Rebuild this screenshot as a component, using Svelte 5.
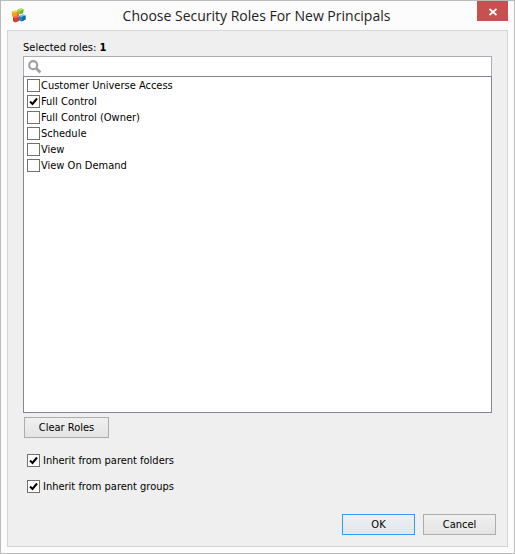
<script lang="ts">
    let roles = [
        { name: "Customer Universe Access", checked: false },
        { name: "Full Control", checked: true },
        { name: "Full Control (Owner)", checked: false },
        { name: "Schedule", checked: false },
        { name: "View", checked: false },
        { name: "View On Demand", checked: false },
    ];
    let search: string = "";
    let inheritFolders: boolean = true;
    let inheritGroups: boolean = true;

    $: selected = roles.filter((role) => role.checked).length;

    function clearRoles() {
        roles = roles.map((role) => ({ ...role, checked: false }));
    }
</script>

<div class="window">
    <header>
        <svg class="logo" width="14" height="15" viewBox="0 0 14 15" aria-hidden="true">
            <path fill="#f7a01b" d="M0 3.5L4 2.5L6 4.5V9L1.5 9.5L0 8z" />
            <path fill="#fcc850" d="M0 3.5L4 2.5L5 4L1.5 5z" />
            <path fill="#f06a20" d="M5 5L7 4.5V8L5 9z" />
            <path fill="#e2382c" d="M1 9L6 8L7 9V13L3 14.5L1 13z" />
            <path fill="#f4705a" d="M1 9L5.5 8L7 9L3 10z" />
            <path fill="#1f8ad2" d="M7 8L11 6.5L13.5 7.5V11.5L9.5 13.5L7 12.5z" />
            <path fill="#6cc6f4" d="M7 8L11 6.5L13.5 7.5L9.5 9z" />
            <path fill="#0f66b0" d="M10 9L13.5 7.5V11.5L10 13.2z" />
            <path fill="#8cc63e" d="M5 2L9 0L11.5 1.5L11 5L8 6.5L5.5 5z" />
            <path fill="#c4e264" d="M5 2L9 0L11.5 1.5L8 3z" />
            <path fill="#6cab2c" d="M8.5 3L11.5 1.5L11 5L8.5 6.3z" />
        </svg>
        <h1>Choose Security Roles For New Principals</h1>
        <button class="close" aria-label="Close">
            <svg width="8" height="8" viewBox="0 0 8 8">
                <path d="M0.5 1l7 6M7.5 1l-7 6" fill="none" stroke="#fff" stroke-width="1.7" />
            </svg>
        </button>
    </header>
    <main>
        <label class="count" for="search">Selected roles:&nbsp;<strong>{selected}</strong></label>
        <div class="search">
            <svg width="14" height="14" viewBox="0 0 14 14" aria-hidden="true">
                <circle cx="5.2" cy="5.2" r="4" fill="none" stroke="#a0a0a0" stroke-width="2.2" />
                <path d="M8 8l4.4 4.4" stroke="#a0a0a0" stroke-width="2.8" />
            </svg>
            <input id="search" type="text" bind:value={search}>
        </div>
        <div class="list">
            {#each roles as role}
                <label>
                    <input type="checkbox" bind:checked={role.checked}>
                    {role.name}
                </label>
            {/each}
        </div>
        <button class="clear" on:click={clearRoles}>Clear Roles</button>
        <div class="inherit">
            <label>
                <input type="checkbox" bind:checked={inheritFolders}>
                Inherit from parent folders
            </label>
            <label>
                <input type="checkbox" bind:checked={inheritGroups}>
                Inherit from parent groups
            </label>
        </div>
        <div class="actions">
            <button class="primary">OK</button>
            <button>Cancel</button>
        </div>
    </main>
</div>

<style>
    .window {
        box-sizing: border-box;
        min-height: 100vh;
        display: flex;
        flex-flow: column;
        padding: 0 6px 6px;
        border: 1px solid #bbbbbb;
        background: #fcfcfc;
        color: #000;
        font: 11px/17px Tahoma, "DejaVu Sans Condensed", sans-serif;
    }
    header {
        display: flex;
        align-items: center;
        height: 29px;
    }
    .logo {
        margin-left: 5px;
    }
    h1 {
        flex: 1;
        margin: 0;
        padding-left: 10px;
        text-align: center;
        color: #222;
        font: 14px/28px "Segoe UI", "Open Sans", sans-serif;
    }
    button {
        box-sizing: border-box;
        height: 21px;
        width: 73px;
        padding: 0;
        border: 1px solid #acacac;
        background: linear-gradient(#f0f0f0, #e4e4e4);
        color: #000;
        font: inherit;
    }
    .close {
        display: flex;
        align-items: center;
        justify-content: center;
        align-self: flex-start;
        width: 31px;
        height: 20px;
        padding: 2px 0 0;
        border: none;
        background: #c75050;
    }
    main {
        flex: 1;
        display: flex;
        flex-flow: column;
        padding: 8px 15px 11px;
        border: 1px solid #d5d5d5;
        background: #efefef;
    }
    .search {
        display: flex;
        align-items: center;
        height: 19px;
        padding-left: 4px;
        border: 1px solid #abadb3;
        border-bottom: none;
        background: #fff;
    }
    .search input {
        flex: 1;
        min-width: 0;
        padding: 0 4px;
        border: none;
        outline: none;
        background: none;
        font: inherit;
    }
    .list {
        flex: 1;
        display: flex;
        flex-flow: column;
        align-items: flex-start;
        border: 1px solid #828790;
        padding-left: 3px;
        background: #fff;
    }
    label {
        display: flex;
        align-items: center;
        align-self: flex-start;
        white-space: nowrap;
    }
    .list label {
        gap: 1px;
        height: 16px;
    }
    input[type="checkbox"] {
        appearance: none;
        box-sizing: border-box;
        width: 13px;
        height: 13px;
        margin: 0;
        border: 1px solid #707070;
        background: #fff;
    }
    input[type="checkbox"]:checked {
        background: #fff url("data:image/svg+xml,%3Csvg xmlns='http://www.w3.org/2000/svg' viewBox='0 0 11 11'%3E%3Cpath d='M2 5.5L4.5 8L9 2.5' fill='none' stroke='%23000' stroke-width='2'/%3E%3C/svg%3E") center / 11px 11px no-repeat;
    }
    .clear {
        width: 85px;
        margin: 4px 0 0 1px;
    }
    .inherit {
        display: flex;
        flex-flow: column;
        gap: 9px;
        padding: 14px 4px 0;
    }
    .inherit label {
        gap: 3px;
    }
    .actions {
        display: flex;
        justify-content: flex-end;
        gap: 8px;
        margin: 19px -4px 0 0;
    }
    .primary {
        border-color: #3399ff;
        background: linear-gradient(#ecf1f5, #e1e6ec);
    }
</style>
